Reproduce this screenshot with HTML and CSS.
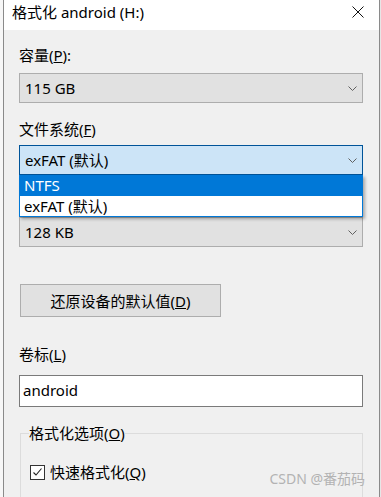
FILE: index.html
```html
<!DOCTYPE html>
<html lang="zh-CN">
<head>
<meta charset="utf-8">
<title>格式化 android (H:)</title>
<link rel="stylesheet" href="styles.css">
</head>
<body>
<div class="screen">
  <div class="edge-left"></div>
  <div class="dialog">
    <div class="titlebar">
      <span class="title">格式化 android (H:)</span>
      <svg class="close" width="12" height="12" viewBox="0 0 12 12">
        <path d="M0.5 0.5 L11.5 11.5 M11.5 0.5 L0.5 11.5" stroke="#111" stroke-width="1" fill="none"/>
      </svg>
    </div>
    <div class="content">
      <div class="field first">
        <div class="label">容量(<u>P</u>):</div>
        <div class="combo"><span>115 GB</span>
          <svg class="chev" width="9" height="5" viewBox="0 0 9 5"><path d="M0.5 0.5 L4.5 4.5 L8.5 0.5" stroke="#606060" fill="none"/></svg>
        </div>
      </div>
      <div class="field has-drop">
        <div class="label">文件系统(<u>F</u>)</div>
        <div class="combo focused"><span>exFAT (默认)</span>
          <svg class="chev" width="9" height="5" viewBox="0 0 9 5"><path d="M0.5 0.5 L4.5 4.5 L8.5 0.5" stroke="#606060" fill="none"/></svg>
        </div>
        <div class="dropdown">
          <div class="opt sel">NTFS</div>
          <div class="opt">exFAT (默认)</div>
        </div>
      </div>
      <div class="field">
        <div class="label covered">分配单元大小(<u>A</u>)</div>
        <div class="combo"><span>128 KB</span>
          <svg class="chev" width="9" height="5" viewBox="0 0 9 5"><path d="M0.5 0.5 L4.5 4.5 L8.5 0.5" stroke="#606060" fill="none"/></svg>
        </div>
      </div>
      <button class="btn" type="button">还原设备的默认值(<u>D</u>)</button>
      <div class="field vol">
        <div class="label">卷标(<u>L</u>)</div>
        <div class="input">android</div>
      </div>
      <fieldset class="group">
        <legend>格式化选项(<u>O</u>)</legend>
        <div class="check">
          <span class="box">
            <svg width="13" height="13" viewBox="0 0 13 13"><path d="M2.5 6.5 L5 9 L10.5 2.5" stroke="#222" stroke-width="1.1" fill="none"/></svg>
          </span>
          <span>快速格式化(<u>Q</u>)</span>
        </div>
      </fieldset>
    </div>
  </div>
  <div class="edge-right"></div>
  <div class="watermark">CSDN @番茄码</div>
</div>
</body>
</html>
```
FILE: styles.css
```css
html, body {
  margin: 0;
  padding: 0;
  background: #f0f0f0;
}
body {
  font-family: "Noto Sans", "Noto Sans CJK SC", sans-serif;
  font-size: 15px;
  color: #000;
}
.screen {
  position: relative;
  display: flex;
  width: 381px;
  height: 497px;
  overflow: hidden;
}
.edge-left {
  flex: none;
  width: 3px;
  background: #f7f7f7;
}
.edge-right {
  flex: none;
  width: 1px;
  background: #e6e6e6;
}
.dialog {
  flex: none;
  width: 375px;
  border-left: 1px solid #8a8a8a;
  border-right: 1px solid #8a8a8a;
  display: flex;
  flex-direction: column;
}
.titlebar {
  flex: none;
  height: 30px;
  background: #fff;
  display: flex;
  align-items: flex-start;
}
.title {
  margin-top: 2px;
  padding-left: 8px;
  line-height: 20px;
}
.close {
  margin-left: auto;
  margin-right: 15px;
  margin-top: 6px;
}
.content {
  flex: 1;
  background: #f0f0f0;
  padding: 0 16px 0 15px;
  display: flex;
  flex-direction: column;
}
.field {
  display: flex;
  flex-direction: column;
}
.has-drop {
  position: relative;
}
.label {
  line-height: 20px;
  margin-top: 16px;
}
.label.covered {
  visibility: hidden;
}
.first .label {
  margin-top: 15px;
}
.first .combo {
  margin-top: 8px;
}
.combo {
  box-sizing: border-box;
  height: 30px;
  margin-top: 6px;
  border: 1px solid #adadad;
  background: #e1e1e1;
  display: flex;
  align-items: center;
  justify-content: space-between;
  padding: 0 5px 0 5px;
  line-height: 20px;
}
.combo.focused {
  background: #cce4f7;
  border-color: #005499;
}
.dropdown {
  position: absolute;
  top: 100%;
  left: 0;
  right: 0;
  background: #fff;
  border: 1px solid #0078d7;
  border-top: none;
  box-shadow: 2px 2px 3px rgba(0, 0, 0, 0.3);
  z-index: 2;
}
.opt {
  height: 20px;
  line-height: 20px;
  padding-left: 4px;
}
.opt.sel {
  height: 21px;
  line-height: 21px;
  background: #0078d7;
  color: #fff;
}
.btn {
  align-self: flex-start;
  box-sizing: border-box;
  width: 201px;
  height: 33px;
  margin: 37px 0 0 1px;
  padding: 0;
  border: 1px solid #adadad;
  background: #e1e1e1;
  font: inherit;
  color: #000;
  line-height: 20px;
}
.vol .label {
  margin-top: 27px;
}
.input {
  box-sizing: border-box;
  height: 32px;
  margin-top: 11px;
  border: 1px solid #7a7a7a;
  background: #fff;
  display: flex;
  align-items: center;
  padding: 0 0 3px 3px;
  line-height: 20px;
}
.group {
  margin: 16px 0 0 1px;
  padding: 0 0 0 8px;
  border: 1px solid #dcdcdc;
  height: 120px;
  min-width: 0;
}
.group legend {
  padding: 0;
  line-height: 20px;
}
.check {
  display: flex;
  align-items: center;
  gap: 5px;
  margin: 19px 0 0 1px;
  line-height: 20px;
}
.box {
  box-sizing: border-box;
  width: 15px;
  height: 15px;
  border: 1px solid #333;
  background: #fff;
  display: flex;
}
.watermark {
  position: absolute;
  right: 16px;
  top: 469px;
  font-size: 14px;
  line-height: 20px;
  color: #b3b3b3;
}
```
